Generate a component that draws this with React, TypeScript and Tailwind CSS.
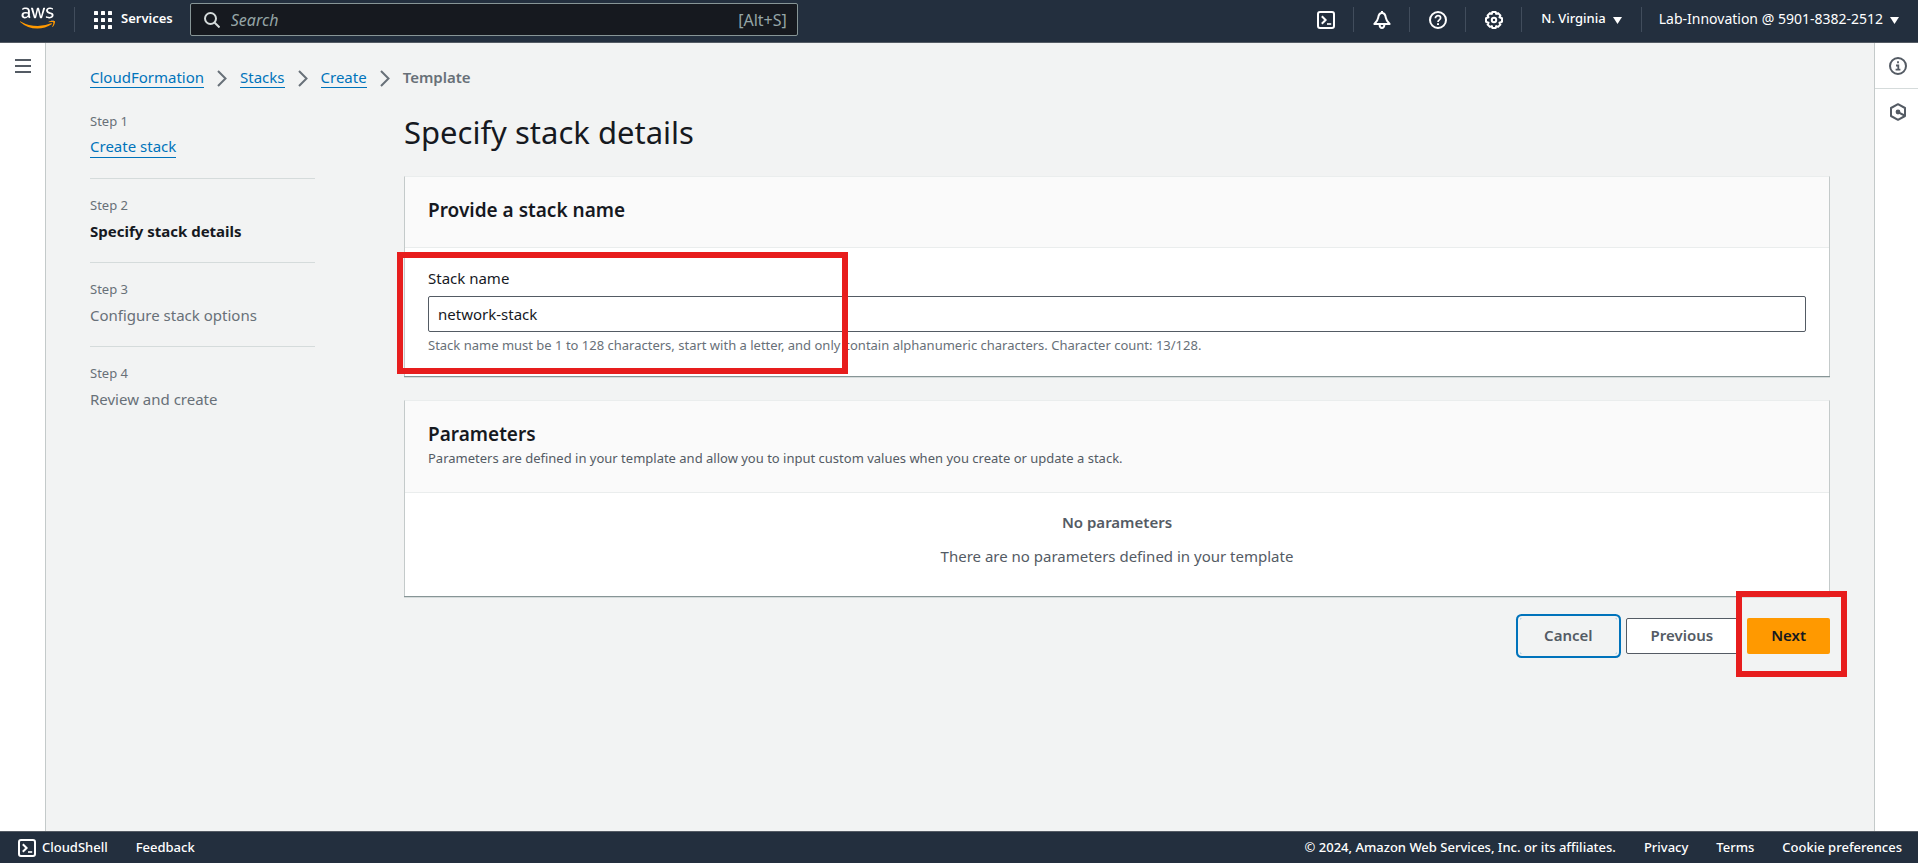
import type { ReactNode } from "react";
import { FaAws } from "react-icons/fa";

function AwsLogo() {
  return (
    <a href="#home" aria-label="AWS home" className="flex w-[35px] shrink-0 flex-col">
      <svg width="0" height="0" className="absolute">
        <defs>
          <linearGradient id="awsFill" gradientUnits="userSpaceOnUse" x1="0" y1="0" x2="0" y2="512">
            <stop offset="0.606" stopColor="#ffffff" />
            <stop offset="0.606" stopColor="#ff9900" />
          </linearGradient>
        </defs>
      </svg>
      <FaAws className="h-7 w-[35px]" fill="url(#awsFill)" />
    </a>
  );
}

function GridIcon() {
  return (
    <svg viewBox="0 0 18 18" className="size-[18px]" fill="#fff" aria-hidden="true">
      {[0, 7, 14].map((y) =>
        [0, 7, 14].map((x) => <rect key={`${x}-${y}`} x={x} y={y} width="4" height="4" rx="0.6" />)
      )}
    </svg>
  );
}

function ShellIcon() {
  return (
    <svg viewBox="0 0 18 18" className="size-[18px]" fill="none" stroke="currentColor" strokeWidth="2" aria-hidden="true">
      <rect x="1" y="1" width="16" height="16" rx="2" strokeLinejoin="round" />
      <path d="M4.8 5.2 8.6 9l-3.8 3.8" />
      <path d="M10 13h4.2" strokeWidth="1.6" />
    </svg>
  );
}

function BellIcon() {
  return (
    <svg viewBox="0 0 18 18" className="size-[18px]" fill="none" stroke="currentColor" strokeWidth="2" strokeLinejoin="round" aria-hidden="true">
      <path d="M9 0v2M9 2C6.2 2 5.6 4 5.2 6.6 4.8 9.400 3.400 11 1.400 13h15.200C14.600 11 13.200 9.400 12.800 6.600 12.400 4 11.800 2 9 2Z" />
      <path d="M6.6 13.5c0 4.6 4.8 4.6 4.8 0" />
    </svg>
  );
}

function HelpIcon() {
  return (
    <svg viewBox="0 0 18 18" className="size-[18px]" fill="none" stroke="currentColor" strokeWidth="2" aria-hidden="true">
      <circle cx="9" cy="9" r="8" />
      <path d="M6.4 7.2C6.4 3.8 11.6 4 11.6 7c0 1.9-2.6 1.9-2.6 4" strokeWidth="1.7" />
      <path d="M9 12.2v1.8" />
    </svg>
  );
}

function GearIcon() {
  return (
    <svg viewBox="0 0 18 18" className="size-[18px]" fill="none" stroke="currentColor" strokeWidth="2" strokeLinejoin="round" aria-hidden="true">
      <path d="M7.3 1h3.4l.5 1.9 1.9-.8 2.3 2.4-.9 1.8 2.500 1v3.400l-2.500 1 .9 1.800-2.300 2.400-1.900-.8-.5 1.900H7.300l-.5-1.900-1.900.8-2.300-2.400.9-1.800-2.500-1V7.300l2.500-1-.9-1.800 2.300-2.400 1.900.8Z" />
      <circle cx="9" cy="9" r="2.2" />
    </svg>
  );
}

function Caret() {
  return (
    <svg viewBox="0 0 9 7" className="mt-[2px] h-[7px] w-[9px]" fill="#fff" aria-hidden="true">
      <path d="M0 0h9L4.5 7Z" />
    </svg>
  );
}

function TopIcon({ label, children }: { label: string; children: ReactNode }) {
  return (
    <div className="flex h-[25px] w-14 items-center justify-center border-r border-[#414d5c]">
      <button type="button" aria-label={label}>
        {children}
      </button>
    </div>
  );
}

function TopBar() {
  return (
    <header className="flex h-[43px] shrink-0 items-start border-b border-[#545b64] bg-[#232f3e] pl-5 pr-[19px] text-white">
      <div className="flex h-[37px] items-start pt-1">
        <AwsLogo />
      </div>
      <div className="ml-[19px] mt-[7px] h-[25px] w-px bg-[#414d5c]" />
      <button type="button" className="ml-[19px] flex h-10 items-center gap-[9px] text-[13px] font-semibold">
        <GridIcon />
        <span className="pb-[2px]">Services</span>
      </button>
      <div className="ml-[17px] mt-[3px] flex h-[33px] w-[608px] items-center rounded-xs border border-[#879596] bg-[#16191f] pl-[13px] pr-[10px]">
        <svg viewBox="0 0 16 16" className="size-4 shrink-0" fill="none" stroke="#d5dbdb" strokeWidth="2" aria-hidden="true">
          <circle cx="6.5" cy="6.5" r="5.5" />
          <path d="m10.5 10.5 5 5" />
        </svg>
        <input
          type="search"
          aria-label="Search"
          placeholder="Search"
          className="ml-[11px] min-w-0 grow bg-transparent text-base text-white outline-none placeholder:italic placeholder:text-[#95a5a6]"
        />
        <span className="text-base text-[#95a5a6]">[Alt+S]</span>
      </div>
      <div className="ml-auto flex h-[39px] items-center">
        <TopIcon label="CloudShell"><ShellIcon /></TopIcon>
        <TopIcon label="Notifications"><BellIcon /></TopIcon>
        <TopIcon label="Support"><HelpIcon /></TopIcon>
        <TopIcon label="Settings"><GearIcon /></TopIcon>
        <button type="button" className="flex h-[25px] items-center gap-[7px] border-r border-[#414d5c] px-[19px] text-[13px] font-medium">
          <span className="pb-[2px]">N. Virginia</span>
          <Caret />
        </button>
        <button type="button" className="flex items-center gap-[7px] pl-[17px] text-sm">
          <span className="pb-[2px]">Lab-Innovation @ 5901-8382-2512</span>
          <Caret />
        </button>
      </div>
    </header>
  );
}

const linkClass = "border-b border-[#0073bb] text-[#0073bb]";

function Crumb({ children }: { children: string }) {
  return (
    <li className="flex items-center gap-[13px]">
      <a href={`#${children}`} className={`${linkClass} leading-[19px]`}>
        {children}
      </a>
      <svg viewBox="0 0 10 17" className="h-[17px] w-[10px]" fill="none" stroke="#687078" strokeWidth="2" aria-hidden="true">
        <path d="m1 1 7.5 7.5L1 16" />
      </svg>
    </li>
  );
}

const steps = [
  { title: "Create stack", state: "done" },
  { title: "Specify stack details", state: "current" },
  { title: "Configure stack options", state: "next" },
  { title: "Review and create", state: "next" },
];

function Steps() {
  return (
    <nav aria-label="Steps" className="w-[225px] shrink-0">
      <ol className="divide-y divide-[#d5dbdb]">
        {steps.map((step, i) => (
          <li key={step.title} className="flex flex-col items-start gap-1 pb-[19px] pt-4 text-[#687078] first:pt-[10px]">
            <span className="text-[13px] leading-5">Step {i + 1}</span>
            <span className="flex h-6 items-start text-[15px] leading-6">
              {step.state === "done" && (
                <a href="#create" className={`${linkClass} leading-[22px]`}>
                  {step.title}
                </a>
              )}
              {step.state === "current" && <b className="font-bold text-[#16191f]">{step.title}</b>}
              {step.state === "next" && step.title}
            </span>
          </li>
        ))}
      </ol>
    </nav>
  );
}

function Card({ title, description, children }: { title: string; description?: string; children: ReactNode }) {
  return (
    <section className="border-x border-t border-x-[#c4caca] border-t-[#eaeded] bg-white shadow-[0_1px_0_0_#879596,0_2px_0_0_#d5dbdb]">
      <div className="border-b border-[#eaeded] bg-[#fafafa] px-[23px] pb-6 pt-5">
        <h2 className="text-[19px] font-semibold leading-[26px] text-[#16191f]">{title}</h2>
        {description && <p className="mt-px text-[13px] leading-5 text-[#545b64]">{description}</p>}
      </div>
      {children}
    </section>
  );
}

export default function App() {
  return (
    <div className="flex min-h-screen flex-col bg-[#f2f3f3] font-['Noto_Sans','Open_Sans',sans-serif] text-[15px] text-[#16191f]">
      <TopBar />
      <div className="flex grow">
        <aside className="flex w-[46px] shrink-0 justify-center border-r border-[#c4caca] bg-white pt-4">
          <button type="button" aria-label="Open navigation" className="h-[14px]">
            <svg viewBox="0 0 16 14" className="h-[14px] w-4" stroke="#545b64" strokeWidth="2" aria-hidden="true">
              <path d="M0 1h16M0 7h16M0 13h16" />
            </svg>
          </button>
        </aside>

        <main className="min-w-0 grow px-11 pt-[25px]">
          <nav aria-label="Breadcrumbs">
            <ol className="flex h-[22px] items-start gap-[13px]">
              <Crumb>CloudFormation</Crumb>
              <Crumb>Stacks</Crumb>
              <Crumb>Create</Crumb>
              <li aria-current="page" className="font-semibold leading-[19px] text-[#687078]">Template</li>
            </ol>
          </nav>

          <div className="mt-[11px] flex gap-[89px]">
            <Steps />
            <div className="min-w-0 grow">
              <h1 className="mt-[11px] text-[31px] leading-10">Specify stack details</h1>
              <div className="mt-6 flex flex-col gap-6">
                <Card title="Provide a stack name">
                  <div className="relative flex flex-col px-[23px] pb-[21px] pt-[18px]">
                    <label htmlFor="stack-name" className="leading-6">Stack name</label>
                    <input
                      id="stack-name"
                      defaultValue="network-stack"
                      className="mt-[6px] h-9 rounded-xs border border-[#545b64] bg-white px-[9px] outline-none"
                    />
                    <p className="mt-[3px] text-[13px] leading-5 text-[#687078]">
                      Stack name must be 1 to 128 characters, start with a letter, and only contain alphanumeric characters. Character count: 13/128.
                    </p>
                    <div className="pointer-events-none absolute -left-2 top-1 h-[122px] w-[451px] border-[6px] border-[#e71d1d]" />
                  </div>
                </Card>
                <Card title="Parameters" description="Parameters are defined in your template and allow you to input custom values when you create or update a stack.">
                  <div className="px-5 pb-7 pt-[17px] text-center text-[#545b64]">
                    <p className="font-semibold leading-6">No parameters</p>
                    <p className="mt-[10px] leading-6">There are no parameters defined in your template</p>
                  </div>
                </Card>
              </div>
              <div className="mt-[22px] flex items-center justify-end gap-[9px] font-semibold leading-5 text-[#545b64]">
                <button type="button" className="h-9 rounded-xs px-6 pb-[2px] ring-2 ring-[#0073bb] ring-offset-2 ring-offset-[#f2f3f3]">Cancel</button>
                <button type="button" className="h-9 rounded-xs border border-[#545b64] bg-white px-6 pb-[2px]">Previous</button>
                <div className="relative">
                  <button type="button" className="h-9 rounded-xs bg-[#ff9900] px-6 pb-[2px] text-[#16191f]">Next</button>
                  <div className="pointer-events-none absolute -left-[11px] -top-[27px] h-[86px] w-[111px] border-[6px] border-[#e71d1d]" />
                </div>
              </div>
            </div>
          </div>
        </main>

        <aside className="w-11 shrink-0 border-l border-[#c4caca] bg-white text-[#545b64]">
          <button type="button" aria-label="Info" className="flex h-[46px] w-full items-center justify-center border-b border-[#d5dbdb]">
            <svg viewBox="0 0 18 18" className="ml-[3px] size-[18px]" fill="none" stroke="currentColor" strokeWidth="2" aria-hidden="true">
              <circle cx="9" cy="9" r="8" />
              <path d="M9 4.2v2M7 8.5h2.3V13M6.6 12.6h4.8" strokeWidth="1.8" />
            </svg>
          </button>
          <button type="button" aria-label="Recent activity" className="flex h-[46px] w-full items-center justify-center">
            <svg viewBox="0 0 18 18" className="ml-[3px] size-[18px]" fill="none" stroke="currentColor" strokeWidth="2" strokeLinejoin="round" aria-hidden="true">
              <path d="M9 1.2 16 5v8l-7 3.8L2 13V5Z" />
              <circle cx="9" cy="9" r="2.4" fill="currentColor" stroke="none" />
              <path d="m9.5 9.3 6 3.2" />
            </svg>
          </button>
        </aside>
      </div>

      <footer className="flex h-8 shrink-0 items-center justify-between border-t border-[#545b64] bg-[#232f3e] pl-[18px] pr-4 text-[13px] font-medium text-white">
        <div className="flex items-center gap-7">
          <button type="button" className="flex items-center gap-[6px]">
            <ShellIcon />
            CloudShell
          </button>
          <a href="#feedback">Feedback</a>
        </div>
        <div className="flex items-center gap-7">
          <span>© 2024, Amazon Web Services, Inc. or its affiliates.</span>
          <a href="#privacy">Privacy</a>
          <a href="#terms">Terms</a>
          <a href="#cookies">Cookie preferences</a>
        </div>
      </footer>
    </div>
  );
}
